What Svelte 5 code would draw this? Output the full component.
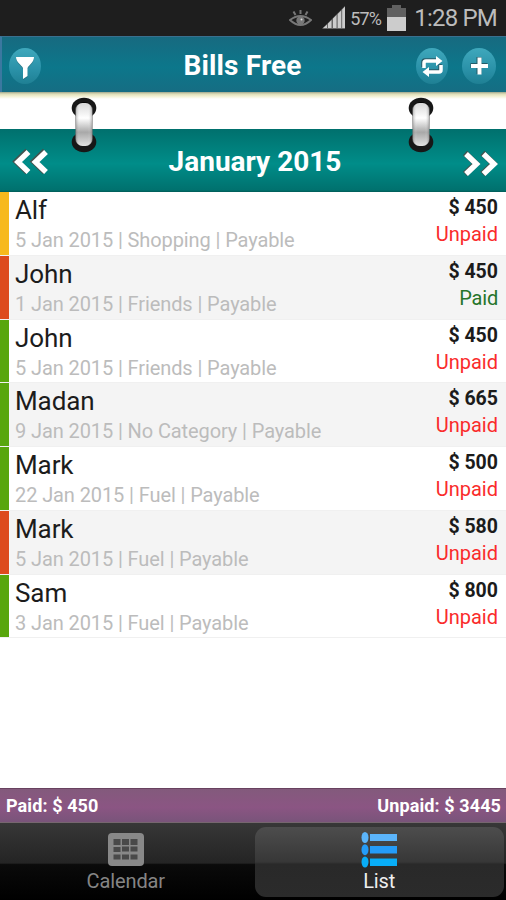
<script>
  const bills = [
    { name: 'Alf', day: 5, category: 'Shopping', amount: 450, paid: false, color: '#f7b91c' },
    { name: 'John', day: 1, category: 'Friends', amount: 450, paid: true, color: '#dd4a1e' },
    { name: 'John', day: 5, category: 'Friends', amount: 450, paid: false, color: '#58a60d' },
    { name: 'Madan', day: 9, category: 'No Category', amount: 665, paid: false, color: '#58a60d' },
    { name: 'Mark', day: 22, category: 'Fuel', amount: 500, paid: false, color: '#58a60d' },
    { name: 'Mark', day: 5, category: 'Fuel', amount: 580, paid: false, color: '#dd4a1e' },
    { name: 'Sam', day: 3, category: 'Fuel', amount: 800, paid: false, color: '#58a60d' },
  ];

  const total = (paid) =>
    bills.filter((b) => b.paid === paid).reduce((sum, b) => sum + b.amount, 0);

  let tab = $state('list');
</script>

{#snippet ring()}
  <svg width="26" height="56" viewBox="0 0 26 56">
    <ellipse cx="13" cy="11" rx="12.3" ry="10.3" fill="#171717" />
    <ellipse cx="13" cy="45" rx="12.3" ry="10.3" fill="#171717" />
    <ellipse cx="13" cy="11" rx="8" ry="6" fill="#050505" />
    <rect x="4" y="6" width="18" height="43" rx="7.5" fill="#777" opacity=".6" />
    <rect x="5" y="6" width="16" height="43" rx="6.5" fill="url(#metal)" />
    <rect x="5" y="6" width="16" height="43" rx="6.5" fill="url(#edge)" />
  </svg>
{/snippet}

<svg class="defs" width="0" height="0">
  <defs>
    <linearGradient id="metal" x1="0" y1="0" x2="0" y2="1">
      <stop offset="0" stop-color="#d8d8d8" />
      <stop offset=".35" stop-color="#fff" />
      <stop offset=".68" stop-color="#a8a8a8" />
      <stop offset="1" stop-color="#e2e2e2" />
    </linearGradient>
    <linearGradient id="edge">
      <stop offset="0" stop-color="#666" stop-opacity=".4" />
      <stop offset=".25" stop-color="#fff" stop-opacity="0" />
      <stop offset=".75" stop-color="#fff" stop-opacity="0" />
      <stop offset="1" stop-color="#666" stop-opacity=".4" />
    </linearGradient>
  </defs>
</svg>

<main>
  <div class="status">
    <svg class="eye" width="23" height="19" viewBox="0 0 23 19" fill="none" stroke="#777" stroke-width="2">
      <path d="M1 11 Q11.500 3 22 11 Q11.500 21 1 11Z" />
      <path d="M11.500 1v4M4.500 2.500l2 3.500M18.500 2.500l-2 3.500" />
      <circle cx="11.500" cy="11.500" r="3.200" fill="#777" />
      <circle cx="12.500" cy="10.500" r="1" fill="#ddd" stroke="none" />
    </svg>
    <svg class="signal" width="24" height="23" viewBox="0 0 24 23">
      <path d="M0 23L23 0V23Z" fill="#666" />
      <path d="M1 22l4-3.500V22zM6 17.500l3.500-3.500v8H6zM11 12.500L14.500 9v13H11zM15.700 8l3.500-3.500V22h-3.500zM20.200 3.500L23 .5V22h-2.800z" fill="#ccc" />
    </svg>
    <span class="percent">57%</span>
    <svg class="battery" width="19" height="26" viewBox="0 0 19 26">
      <path d="M5 0h9v3h5v23H0V3h5z" fill="#606060" />
      <path d="M0 12h19v14H0z" fill="#ccc" />
    </svg>
    <span class="clock">1:28 PM</span>
  </div>

  <header>
    <button class="round" aria-label="Filter">
      <svg width="32" height="36" viewBox="0 0 32 36">
        <path d="M7 10h18c0 5-5 8-6.500 11v8l-4.500 3V21C12.500 18 7 15 7 10z" fill="#255b68" opacity=".5" />
        <path d="M7 9h18c0 5-5 8-6.500 11v8l-4.500 3V20C12.500 17 7 14 7 9z" fill="#fff" />
      </svg>
    </button>
    <h1>Bills Free</h1>
    <button class="round sync" aria-label="Sync">
      <svg width="32" height="36" viewBox="0 0 32 36">
        <g fill="none" stroke-width="3.500">
          <path d="M8 20v-5q0-2 2-2h11M25 17v5q0 2-2 2H12" stroke="#285b68" transform="translate(-1 -1)" />
          <path d="M8 20v-5q0-2 2-2h11M25 17v5q0 2-2 2H12" stroke="#fff" />
        </g>
        <path d="M20 8l6.500 5-6.500 5zM13 19l-6.500 5 6.500 5z" fill="#fff" />
      </svg>
    </button>
    <button class="round" aria-label="Add bill">
      <svg width="34" height="36" viewBox="0 0 34 36">
        <path d="M17 9v17M8.500 17.500h17" stroke="#235b67" stroke-width="5" />
        <path d="M17.500 9.500v17M9 18h17" stroke="#fff" stroke-width="4" />
      </svg>
    </button>
  </header>

  <section class="month">
    <div class="binding">
      <span class="ring left">{@render ring()}</span>
      <span class="ring right">{@render ring()}</span>
    </div>
    <div class="month-bar">
      <button class="arrow" aria-label="Previous month">
        <svg width="36" height="28" viewBox="0 0 36 28" fill="none">
          <path d="M15.500 3L4.500 13.500l11 10.500M33 3L22 13.500l11 10.500" stroke="#43534f" stroke-width="6" />
          <path d="M16.500 4L6 14l10.500 10M34 4L23.500 14 34 24" stroke="#fff" stroke-width="5.500" />
        </svg>
      </button>
      <h2>January 2015</h2>
      <button class="arrow next" aria-label="Next month">
        <svg width="36" height="28" viewBox="0 0 36 28" fill="none">
          <path d="M3 3l11 10.500L3 24M20.500 3l11 10.500-11 10.500" stroke="#43534f" stroke-width="6" />
          <path d="M4 4l10.500 10L4 24M21.500 4L32 14 21.500 24" stroke="#fff" stroke-width="5.500" />
        </svg>
      </button>
    </div>
  </section>

  <ul>
    {#each bills as bill}
      <li>
        <span class="strip" style:background={bill.color}></span>
        <div class="info">
          <div class="name">{bill.name}</div>
          <div class="detail">{bill.day} Jan 2015 | {bill.category} | Payable</div>
        </div>
        <div class="money">
          <div class="amount">$ {bill.amount}</div>
          <div class="state" class:paid={bill.paid}>{bill.paid ? 'Paid' : 'Unpaid'}</div>
        </div>
      </li>
    {/each}
  </ul>

  <div class="totals">
    <span>Paid: $ {total(true)}</span>
    <span>Unpaid: $ {total(false)}</span>
  </div>

  <nav>
    <button class:active={tab === 'calendar'} onclick={() => (tab = 'calendar')}>
      <svg width="36" height="34" viewBox="0 0 36 34">
        <rect width="36" height="33" rx="4" fill="#888" />
        <path
          d="M5.500 6h7v6h-7zM14 6h7v6h-7zM22.500 6h7v6h-7zM5.500 14h7v5h-7zM14 13.500h7v5h-7zM22.500 13.500h7v5h-7zM5.500 21.500h7v5h-7zM14 21.500h7v5h-7zM22.500 21.500h7v5h-7z"
          fill="#494949"
        />
      </svg>
      Calendar
    </button>
    <button class:active={tab === 'list'} onclick={() => (tab = 'list')}>
      <svg width="36" height="36" viewBox="0 0 36 36">
        <g fill="#5bb5fb"><ellipse cx="4" cy="5.500" rx="3.500" ry="5.500" /><path d="M9 2h27v7H9z" /></g>
        <g fill="#249cf8"><ellipse cx="4" cy="17.700" rx="3.500" ry="5.500" /><path d="M9 14h27v7.500H9z" /></g>
        <g fill="#08adf7"><ellipse cx="4" cy="30" rx="3.500" ry="5.500" /><path d="M9 26.500h27V34H9z" /></g>
      </svg>
      List
    </button>
  </nav>
</main>

<style>
  :global(body) {
    background: #fff;
  }

  main {
    height: 900px;
    display: flex;
    flex-direction: column;
    overflow: hidden;
    background: #fff;
    font-family: Roboto, 'Noto Sans', sans-serif;
  }

  .defs { position: absolute; }

  button {
    padding: 0;
    border: 0;
    background: none;
    font: inherit;
    color: inherit;
    cursor: pointer;
  }
  svg { display: block; }
  h1, h2, ul { margin: 0; padding: 0; }

  .status {
    height: 36px;
    flex: none;
    box-sizing: border-box;
    display: flex;
    align-items: center;
    justify-content: flex-end;
    padding-right: 9px;
    background: #1e1e1e;
    color: #bcbcbc;
  }
  .eye { margin-right: 10px; }
  .signal { margin: -1px 4px 0 0; }
  .percent {
    width: 31px;
    margin-right: 6px;
    font-size: 18px;
    letter-spacing: -0.9px;
  }
  .battery { margin-right: 8px; }
  .clock {
    font-size: 24px;
    letter-spacing: -0.8px;
  }

  header {
    height: 56px;
    flex: none;
    box-sizing: border-box;
    display: flex;
    align-items: center;
    padding: 3px 10px 0 7px;
    border-top: 1px solid #39708f;
    border-left: 2px solid #3b78a0;
    background: linear-gradient(#176a80, #0c778b 55%, #166d83);
    color: #fff;
  }
  h1 {
    flex: 1;
    padding-left: 28px;
    text-align: center;
    font-size: 28px;
    line-height: 32px;
    font-weight: 700;
    letter-spacing: 0.15px;
  }
  .round {
    width: 32px;
    height: 36px;
    border-radius: 50%;
    background: linear-gradient(#3fa8bc, #2a91a8 60%, #1f8094);
  }
  .sync { margin-right: 14px; }
  .round:last-child { width: 34px; }

  .month {
    flex: none;
    position: relative;
  }
  .binding {
    height: 37px;
    background: linear-gradient(#9ca58d, #deddb8 2px, #f1efcf 4px, #fff 7px);
  }
  .ring {
    position: absolute;
    top: 5px;
  }
  .left { left: 71px; }
  .right { left: 408px; }

  .month-bar {
    height: 63px;
    box-sizing: border-box;
    display: flex;
    align-items: center;
    justify-content: space-between;
    padding: 3px 8px 0 12px;
    background: linear-gradient(#00706d, #008d89 55%, #00716e 97%, #005a56);
    color: #fff;
  }
  .next { margin-top: 4px; }
  h2 {
    font-size: 28px;
    line-height: 32px;
    font-weight: 700;
  }

  ul {
    flex: 1;
    list-style: none;
  }
  li {
    height: 63.75px;
    box-sizing: border-box;
    display: flex;
    padding-right: 8px;
    border-bottom: 1px solid #f0f0f0;
  }
  li:nth-child(even) { background: #f4f4f4; }

  .strip { width: 9px; }
  .info {
    flex: 1;
    padding-left: 6px;
  }
  .name {
    padding-top: 3px;
    font-size: 26px;
    line-height: 31px;
    letter-spacing: -0.1px;
    color: #1c1c1c;
  }
  .detail {
    font-size: 20px;
    line-height: 28px;
    letter-spacing: -0.1px;
    color: #bcbcbc;
  }
  .money { text-align: right; }
  .amount {
    padding-top: 2px;
    font-size: 19.5px;
    line-height: 27px;
    font-weight: 700;
    color: #1b1b1b;
  }
  .state {
    font-size: 20px;
    line-height: 26px;
    color: #fa2b2b;
  }
  .paid {
    color: #26752b;
    letter-spacing: -0.2px;
  }

  .totals {
    height: 35px;
    flex: none;
    box-sizing: border-box;
    display: flex;
    justify-content: space-between;
    align-items: center;
    padding: 0 5px 0 6px;
    border-top: 1px solid #68425f;
    border-bottom: 1px solid #76666f;
    background: linear-gradient(#835a7c, #8b5583 55%, #79547a);
    color: #fff;
    font-size: 18px;
    font-weight: 700;
    letter-spacing: 0.1px;
  }

  nav {
    height: 77px;
    flex: none;
    box-sizing: border-box;
    display: flex;
    gap: 4px;
    padding: 4px 2px 3px 1px;
    background: linear-gradient(#373737, #242424 52%, #0a0a0a 54%, #000);
  }
  nav button {
    flex: 1;
    display: flex;
    flex-direction: column;
    align-items: center;
    padding-top: 5px;
    border-radius: 11px;
    color: #858585;
    font-size: 20px;
    line-height: 24px;
    letter-spacing: -0.1px;
  }
  nav svg {
    height: 36px;
    margin-bottom: 1px;
  }
  nav .active {
    background: linear-gradient(#4d4d4d, #373737 50%, #292929 53%, #2b2b2b);
    color: #eee;
  }
</style>
